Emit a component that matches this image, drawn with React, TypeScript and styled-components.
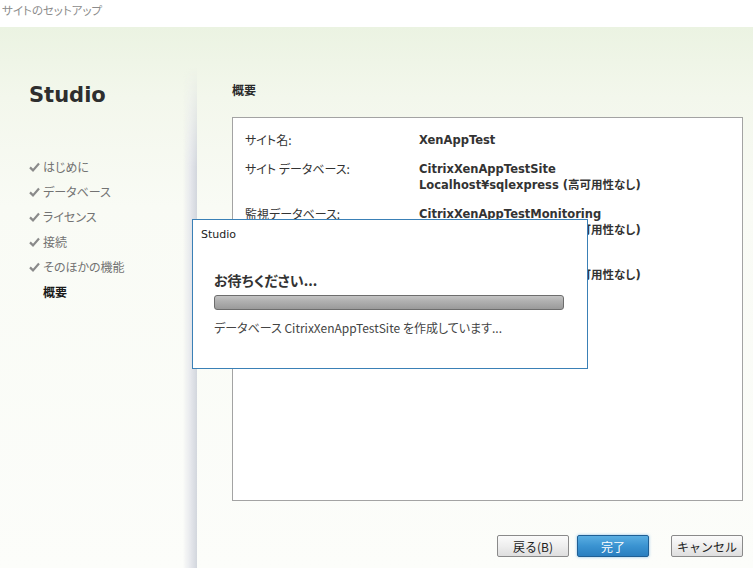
import { createGlobalStyle, styled } from 'styled-components';

const GlobalStyle = createGlobalStyle`
  html, body {
    margin: 0;
    padding: 0;
    background: #ffffff;
  }
  body {
    font-family: 'Noto Sans CJK JP', sans-serif;
    font-feature-settings: 'palt';
  }
`;

const steps = ['はじめに', 'データベース', 'ライセンス', '接続', 'そのほかの機能'];

const rows = [
  { label: 'サイト名:', value: ['XenAppTest'] },
  {
    label: 'サイト データベース:',
    value: ['CitrixXenAppTestSite', 'Localhost¥sqlexpress (高可用性なし)'],
  },
  {
    label: '監視データベース:',
    value: ['CitrixXenAppTestMonitoring', 'Localhost¥sqlexpress (高可用性なし)'],
  },
  {
    label: '構成ログ データベース:',
    value: ['CitrixXenAppTestLogging', 'Localhost¥sqlexpress (高可用性なし)'],
  },
];

function Check() {
  return (
    <svg width="11" height="10" viewBox="0 0 11 10">
      <path d="M1 5.4 L4 8.4 L10 1.6" fill="none" stroke="#8a8a8a" strokeWidth="2.2" />
    </svg>
  );
}

function App() {
  return (
    <>
      <GlobalStyle />
      <Window>
        <TitleBar>サイトのセットアップ</TitleBar>
        <Body>
          <Sidebar>
            <Brand>Studio</Brand>
            <StepList>
              {steps.map((s) => (
                <Step key={s}>
                  <CheckSlot>
                    <Check />
                  </CheckSlot>
                  {s}
                </Step>
              ))}
              <Step $current>
                <CheckSlot />
                概要
              </Step>
            </StepList>
          </Sidebar>
          <Main>
            <Heading>概要</Heading>
            <SummaryBox>
              <SummaryGrid>
                {rows.map((r) => (
                  <>
                    <Label key={r.label}>{r.label}</Label>
                    <Value key={r.label + 'v'}>
                      {r.value.map((v) => (
                        <div key={v}>{v}</div>
                      ))}
                    </Value>
                  </>
                ))}
              </SummaryGrid>
            </SummaryBox>
            <ButtonRow>
              <Button>戻る(B)</Button>
              <Button $primary>完了</Button>
              <Button $gap>キャンセル</Button>
            </ButtonRow>
          </Main>
        </Body>
        <Dialog>
          <DialogTitle>Studio</DialogTitle>
          <DialogBody>
            <WaitText>お待ちください...</WaitText>
            <Progress />
            <StatusText>データベース CitrixXenAppTestSite を作成しています...</StatusText>
          </DialogBody>
        </Dialog>
      </Window>
    </>
  );
}

const Window = styled.div`
  position: relative;
  width: 753px;
  height: 568px;
  display: flex;
  flex-direction: column;
  overflow: hidden;
`;
const TitleBar = styled.div`
  height: 27px;
  box-sizing: border-box;
  padding: 2px 0 0 2px;
  font-size: 11.5px;
  line-height: 16px;
  color: #8c8c8c;
  background: #ffffff;
`;
const Body = styled.div`
  flex: 1;
  display: flex;
  background: linear-gradient(180deg, #ebf3e2 0px, #f3f7ec 70px, #f9fbf5 180px, #fcfdfa 100%);
`;
const Sidebar = styled.div`
  position: relative;
  width: 197px;
  flex-shrink: 0;
  box-sizing: border-box;
  padding: 55px 0 0 29px;

  /* soft edge shadow that fades in below the header */
  &::after {
    content: '';
    position: absolute;
    top: 0;
    bottom: 0;
    right: 0;
    width: 14px;
    background: linear-gradient(90deg, rgba(215, 219, 226, 0) 0, #e4e6eb 8px, #d2d6dd 14px);
    -webkit-mask-image: linear-gradient(180deg, transparent 40px, #000 140px);
    mask-image: linear-gradient(180deg, transparent 40px, #000 140px);
  }
`;
const Brand = styled.div`
  font-family: 'DejaVu Sans', 'Noto Sans CJK JP', sans-serif;
  font-weight: 700;
  font-size: 21px;
  line-height: 26px;
  color: #2e2e2e;
`;
const StepList = styled.div`
  margin-top: 46px;
  display: flex;
  flex-direction: column;
`;
const Step = styled.div<{ $current?: boolean }>`
  display: flex;
  align-items: center;
  height: 25px;
  font-size: 12px;
  font-weight: ${(p) => (p.$current ? 700 : 400)};
  color: ${(p) => (p.$current ? '#1a1a1a' : '#737373')};
`;
const CheckSlot = styled.span`
  width: 14px;
  display: inline-flex;
  align-items: center;
`;
const Main = styled.div`
  flex: 1;
  display: flex;
  flex-direction: column;
  padding: 54px 10px 11px 35px;
`;
const Heading = styled.div`
  font-size: 12px;
  font-weight: 700;
  line-height: 18px;
  color: #2a2a2a;
`;
const SummaryBox = styled.div`
  margin-top: 18px;
  height: 384px;
  box-sizing: border-box;
  border: 1px solid #a3a3a3;
  background: #ffffff;
  padding: 14px 12px;
`;
const SummaryGrid = styled.div`
  display: grid;
  grid-template-columns: 174px 1fr;
  row-gap: 13px;
  font-size: 12px;
  line-height: 16px;
  color: #333333;
`;
const Label = styled.div`
  font-family: 'Noto Sans CJK JP', sans-serif;
`;
const Value = styled.div`
  font-family: 'DejaVu Sans', 'Noto Sans CJK JP', sans-serif;
  font-weight: 700;
  font-size: 11.5px;
`;
const ButtonRow = styled.div`
  margin-top: auto;
  display: flex;
  justify-content: flex-end;
  gap: 8px;
`;
const Button = styled.button<{ $primary?: boolean; $gap?: boolean }>`
  width: 72px;
  height: 22px;
  margin-left: ${(p) => (p.$gap ? '14px' : '0')};
  padding: 0;
  font-family: 'Noto Sans CJK JP', sans-serif;
  font-size: 12px;
  border-radius: 2px;
  color: ${(p) => (p.$primary ? '#ffffff' : '#222222')};
  border: 1px solid ${(p) => (p.$primary ? '#1f5f94' : '#8a8a8a')};
  background: ${(p) =>
    p.$primary
      ? 'linear-gradient(180deg, #5aaee2 0%, #3a93d1 50%, #2a7fc0 100%)'
      : 'linear-gradient(180deg, #fbfbfb 0%, #eeeeee 50%, #dedede 100%)'};
  box-shadow: ${(p) => (p.$primary ? '0 0 3px rgba(60, 150, 220, 0.6)' : 'none')};
`;
const Dialog = styled.div`
  position: absolute;
  left: 192px;
  top: 219px;
  width: 396px;
  height: 150px;
  box-sizing: border-box;
  border: 1px solid #3a80b6;
  background: #ffffff;
`;
const DialogTitle = styled.div`
  padding: 7px 0 0 8px;
  font-family: 'DejaVu Sans', sans-serif;
  font-size: 11px;
  line-height: 16px;
  color: #222222;
`;
const DialogBody = styled.div`
  padding: 28px 0 0 21px;
`;
const WaitText = styled.div`
  font-size: 14px;
  font-weight: 700;
  line-height: 18px;
  color: #333333;
`;
const Progress = styled.div`
  margin-top: 6px;
  width: 350px;
  height: 15px;
  box-sizing: border-box;
  border: 1px solid #6d6d6d;
  border-radius: 3px;
  background: linear-gradient(180deg, #c4c4c4 0%, #b0b0b0 40%, #9a9a9a 100%);
`;
const StatusText = styled.div`
  margin-top: 10px;
  font-size: 12px;
  line-height: 16px;
  color: #444444;
`;

export default App;
